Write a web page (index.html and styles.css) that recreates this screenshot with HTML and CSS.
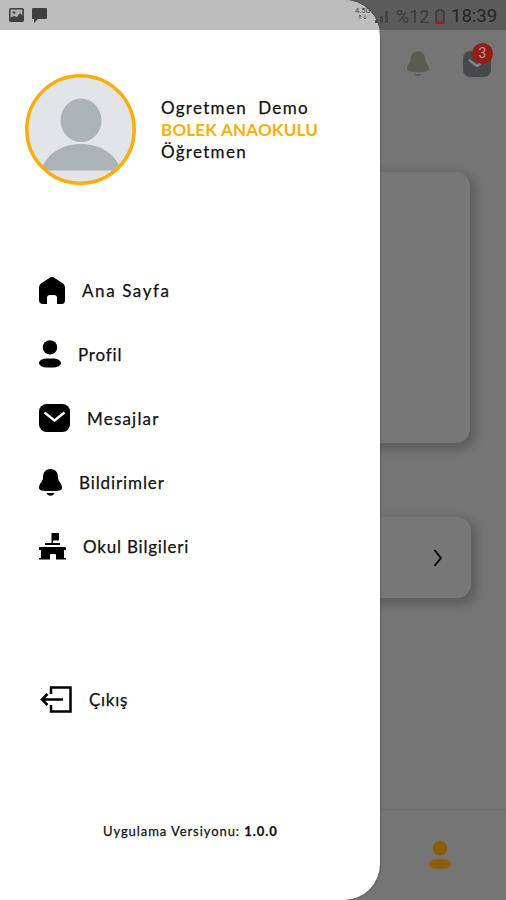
FILE: index.html
```html
<!DOCTYPE html>
<html lang="tr">
<head>
<meta charset="utf-8">
<title>Bolek Anaokulu</title>
<link rel="stylesheet" href="styles.css">
</head>
<body>
<div class="phone">
  <main class="screen">
    <div class="status">
      <svg class="signal" width="35" height="20" viewBox="0 0 35 20"><text x="0" y="8" class="net">4.5G</text><path d="M5 14v-4m-1.500 1.500L5 10l1.500 1.500M10 10v4m-1.500-1.500L10 14l1.500-1.500" fill="none" stroke="#555" stroke-width=".8"/><path d="M20 18v-3h3v3zM25 18v-7h3v7zM30 18V6h3v12z" fill="#454545"/></svg>
      <span class="percent">%12</span>
      <svg class="battery" width="10" height="15" viewBox="0 0 10 15"><path d="M3 1h4v1h2v12H1V2h2z" fill="#555" stroke="#3b3b3b" stroke-width="1.5"/><path d="M1 12h8v2H1z" fill="#ad1e19"/></svg>
      <span class="clock">18:39</span>
    </div>
    <header class="topbar">
      <svg width="22" height="26" viewBox="0 0 24 28"><path d="M12 0C7 0 4 4 4 9c0 4-4 6-4 10s5 4 12 4 12 0 12-4-4-6-4-10c0-5-3-9-8-9zM8 25h8c-1 3-7 3-8 0z" fill="#5b5a55"/></svg>
      <div class="mail">
        <svg width="28" height="26" viewBox="0 0 28 26"><rect width="28" height="26" rx="7" fill="#45494b"/><path d="m6 9 8 6 8-6" fill="none" stroke="#858889" stroke-width="2.2"/></svg>
        <span class="badge">3</span>
      </div>
    </header>
    <section class="card large"></section>
    <section class="card small"><svg width="10" height="18" viewBox="0 0 10 18"><path d="m1.5 1 6.3 8-6.3 8" fill="none" stroke="#080808" stroke-width="2"/></svg></section>
    <nav class="tabbar"><svg width="22" height="28" viewBox="0 0 22 28"><circle cx="11" cy="7.3" r="7.2" fill="#8c5d00"/><rect y="18.5" width="22" height="9" rx="7" ry="4.5" fill="#8c5d00"/></svg></nav>
  </main>

  <aside class="drawer">
    <div class="drawer-status">
      <svg width="15" height="14" viewBox="0 0 15 14"><rect x=".8" y=".8" width="13.4" height="12.4" rx="1" fill="#b0b0b0" stroke="#404040" stroke-width="1.6"/><path d="M1 10l4-2 3 1 3-4 3 3v5H1z" fill="#404040"/><circle cx="5" cy="4.5" r="1.3" fill="#404040"/></svg>
      <svg width="15" height="15" viewBox="0 0 15 15"><path d="M1 0h13q1 0 1 1v9q0 1-1 1H6l-4 4v-4H1q-1 0-1-1V1q0-1 1-1z" fill="#404040"/></svg>
    </div>
    <div class="profile">
      <svg class="avatar" width="111" height="111" viewBox="0 0 111 111"><defs><clipPath id="face"><circle cx="55.5" cy="55.5" r="53"/></clipPath></defs><circle cx="55.5" cy="55.5" r="53.5" fill="#e2e5e8"/><g clip-path="url(#face)" fill="#acb3b7"><ellipse cx="56" cy="46.3" rx="20.5" ry="21.8"/><path d="M16 96.5C21 80 37 70 56 70s35 10 40 26.500z"/></g><circle cx="55.500" cy="55.500" r="53.700" fill="none" stroke="#f9ae0b" stroke-width="3.500"/></svg>
      <div class="identity">
        <div class="line name">Ogretmen&nbsp; Demo</div>
        <div class="line school">BOLEK ANAOKULU</div>
        <div class="line role">Öğretmen</div>
      </div>
    </div>
    <nav class="menu">
      <a class="item home"><svg width="26" height="27" viewBox="0 0 26 27"><path d="M10.300 1Q13-1 15.700 1L24 6.500Q26 8 26 10.500V23q0 4-3 4h-5v-6q0-3-3-3h-4q-3 0-3 3v6H4q-4 0-4-4V10.500Q0 8 2 6.500z"/></svg><span>Ana Sayfa</span></a>
      <a class="item person"><svg width="22" height="28" viewBox="0 0 22 28"><circle cx="11" cy="7.400" r="7.200"/><rect y="18.500" width="22" height="9" rx="8" ry="4.500"/></svg><span>Profil</span></a>
      <a class="item messages"><svg width="31" height="28" viewBox="0 0 31 28"><rect width="31" height="28" rx="7.500"/><path d="m5.500 8.500 10 8 10-8" fill="none" stroke="#fff" stroke-width="2.300"/></svg><span>Mesajlar</span></a>
      <a class="item alerts"><svg width="23" height="27" viewBox="0 0 23 27"><path d="M11.500 0C6.500 0 4 3.500 4 8.500 4 13 0 14 0 18.500 0 22 4 22 11.500 22S23 22 23 18.500C23 14 19 13 19 8.500 19 3.500 16.500 0 11.500 0zM7.500 24h8c-1 3.500-7 3.500-8 0z"/></svg><span>Bildirimler</span></a>
      <a class="item info"><svg width="27" height="28" viewBox="0 0 27 28"><path d="M12.500 1H20v7.500h-6V11h7v2H6v-2h6.500zM1 15h25q1 0 1 1v2h-2v8h2v1.500H17V23q0-1-1-1h-4q-1 0-1 1v4.500H0V26h2v-8H0v-2q0-1 1-1z"/></svg><span>Okul Bilgileri</span></a>
      <a class="item exit"><svg width="33" height="27" viewBox="0 0 33 27"><path d="M12 8V1.500h19.500v24H12V19M24 13.500H3M8.500 8 3 13.500 8.500 19" fill="none" stroke="#000" stroke-width="2.500"/></svg><span>Çıkış</span></a>
    </nav>
    <footer class="version">Uygulama Versiyonu: <b>1.0.0</b></footer>
  </aside>
</div>
</body>
</html>
```

FILE: styles.css
```css
* { box-sizing: border-box; }
body { margin: 0; font-family: Lato, "Open Sans", sans-serif; color: #111; }
.phone { position: relative; width: 506px; height: 900px; overflow: hidden; background: #757575; }
.screen { height: 900px; display: flex; flex-direction: column; }
.status { height: 30px; flex: none; background: #5b5b5b; display: flex; align-items: center; justify-content: flex-end; padding: 2px 9px 0 0; font-family: Roboto, sans-serif; color: #242424; }
.signal { position: relative; z-index: 2; margin: 0 6px 2px 0; }
.net { font: 7.5px Roboto, sans-serif; fill: #444; }
.percent { width: 34px; font-size: 18px; color: #393939; white-space: nowrap; }
.battery { margin: 0 6px 0 5px; }
.clock { width: 46px; font-size: 18.500px; white-space: nowrap; }
.topbar { height: 70px; flex: none; display: flex; justify-content: flex-end; align-items: center; gap: 34px; padding: 0 15px 3px 0; }
.mail { position: relative; width: 28px; height: 26px; }
.mail svg { display: block; }
.badge { position: absolute; top: -8px; left: 9px; width: 21px; height: 21px; border-radius: 50%; background: #931c14; color: #b9a09d; font: 14px/21px Roboto, sans-serif; text-align: center; }
.card { flex: none; width: 434px; margin-left: 36px; border-radius: 14px; background: #777; box-shadow: 3px 4px 10px 3px rgba(0, 0, 0, .2); }
.large { height: 271px; margin-top: 72px; }
.small { height: 81px; margin-top: 74px; width: 435px; display: flex; align-items: center; justify-content: flex-end; padding-right: 28px; }
.tabbar { height: 91px; flex: none; margin-top: auto; border-top: 1px solid #6e6e6e; display: flex; align-items: center; justify-content: flex-end; padding-right: 55px; }
.drawer { position: absolute; z-index: 1; inset: 0 auto 0 0; width: 380px; border-radius: 0 36px 36px 0; overflow: hidden; background: #fff; box-shadow: 0 0 2px #333; -webkit-text-stroke: .25px currentColor; }
.drawer-status { height: 30px; background: #bdbdbd; display: flex; align-items: center; gap: 8px; padding-left: 9px; }
.profile { height: 155px; display: flex; align-items: flex-end; padding-left: 25px; gap: 25px; }
.avatar { flex: none; }
.identity { height: 88px; }
.line { height: 22px; line-height: 22px; font-size: 17px; white-space: nowrap; }
.name { letter-spacing: 1.3px; }
.school { letter-spacing: .2px; color: #f9ae0b; font-weight: 700; -webkit-text-stroke: 0; }
.role { letter-spacing: 1.3px; }
.menu { margin-top: 73px; }
.item { height: 64px; display: flex; align-items: center; padding-left: 39px; font-size: 17px; letter-spacing: .8px; }
.item svg { flex: none; }
.item span { white-space: nowrap; }
.home { gap: 17px; letter-spacing: 1.6px; }
.person { gap: 17px; }
.messages { gap: 17px; letter-spacing: 1.2px; }
.alerts { gap: 17px; letter-spacing: .9px; }
.info { gap: 17px; }
.exit { margin-top: 89px; gap: 17px; letter-spacing: .7px; }
.version { margin-top: 91px; padding-left: 103px; font-size: 13px; line-height: 18px; letter-spacing: .93px; white-space: nowrap; }
```
